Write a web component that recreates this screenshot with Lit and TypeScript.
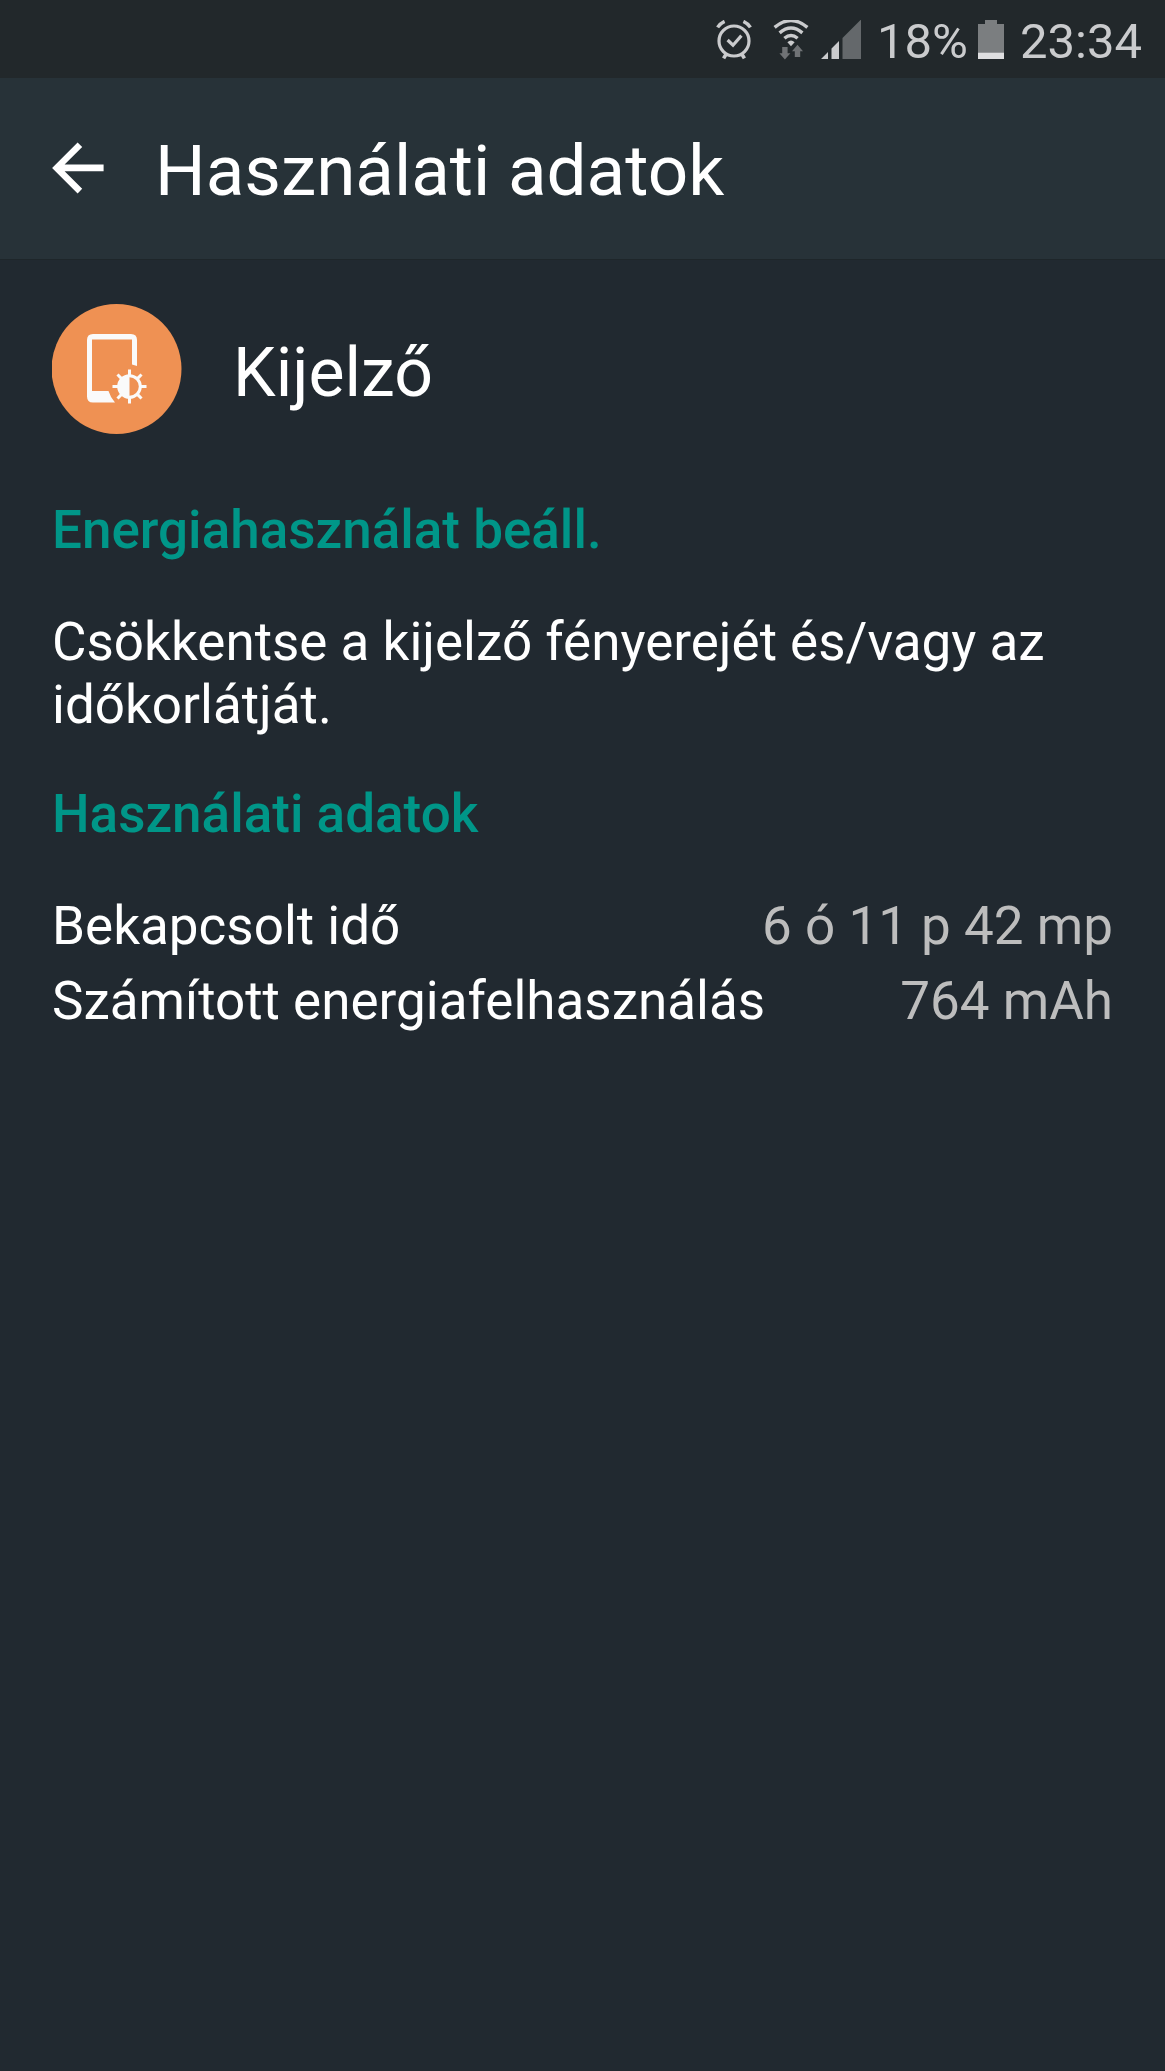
import { LitElement, html, css, svg } from "lit";
import { customElement } from "lit/decorators.js";

const usage = [
  { label: "Bekapcsolt idő", value: "6 ó 11 p 42 mp" },
  { label: "Számított energiafelhasználás", value: "764 mAh" },
];

const rays = [0, 45, 90, 135, 180, 225, 270, 315];

@customElement("status-bar")
class StatusBar extends LitElement {
  static styles = css`
    :host {
      display: flex;
      align-items: center;
      justify-content: flex-end;
      box-sizing: border-box;
      height: 78px;
      padding: 4px 23px 0 0;
      background: #22282b;
      color: #cacbcd;
      font-size: 49px;
      line-height: 58px;
    }
    svg {
      display: block;
      flex: none;
    }
    span,
    time {
      padding-top: 2px;
    }
    .alarm {
      margin-right: 21px;
    }
    .wifi {
      margin-right: 12px;
    }
    .signal {
      margin-right: 15px;
    }
    .battery {
      margin: 0 16px 0 10px;
    }
  `;

  render() {
    return html`
      <svg class="alarm" width="36" height="42" viewBox="0 0 36 42" fill="none" stroke="#cacbcd" aria-hidden="true">
        <circle cx="18" cy="21" r="15" stroke-width="3.2" />
        <path d="M11.6 20 L17 25.2 L25.4 15.6" stroke-width="3.2" />
        <path d="M1.6 7.4 Q4 3.4 8.6 1.4 M27.4 1.4 Q32 3.4 34.4 7.4" stroke-width="3.4" />
        <path d="M10.2 34 L7.6 38.4 M25.8 34 L28.4 38.4" stroke-width="3.6" />
      </svg>
      <svg class="wifi" width="36" height="42" viewBox="0 0 36 42" aria-hidden="true">
        <g fill="none" stroke="#cacbcd" stroke-width="3.4">
          <path d="M1.6 7.4 Q18 -6.4 34.4 7.4" />
          <path d="M6.6 12.9 Q18 3.3 29.4 12.9" />
          <path d="M11.4 18.2 Q18 12.6 24.6 18.2" />
        </g>
        <path d="M14.4 22.3 Q18 18.9 21.6 22.3 L18 26.2 Z" fill="#cacbcd" />
        <path d="M9.2 27 H14.6 V33.2 H17.4 L11.9 39.6 L6.4 33.2 H9.2 Z" fill="#707376" />
        <path d="M21.8 37 H27.2 V31.2 H30 L24.5 24.8 L19 31.2 H21.8 Z" fill="#707376" />
      </svg>
      <svg class="signal" width="41" height="42" viewBox="0 0 41 42" aria-hidden="true">
        <path d="M0 39 L7 32 V39 Z M10.5 39 V28.5 L18 21 V39 Z" fill="#cacbcd" />
        <path d="M21.5 39 V18 L40 -0.5 V39 Z" fill="#64686b" />
      </svg>
      <span>18%</span>
      <svg class="battery" width="26" height="42" viewBox="0 0 26 42" aria-hidden="true">
        <path d="M0 4 H7 V0 H19 V4 H26 V32.5 H0 Z" fill="#7b7e80" />
        <path d="M0 32.5 H26 V39 H0 Z" fill="#dedee0" />
      </svg>
      <time>23:34</time>
    `;
  }
}

@customElement("app-root")
class AppRoot extends LitElement {
  static styles = css`
    :host {
      display: block;
      min-height: 100vh;
      background: #212930;
      color: #fff;
      font-family: Roboto, "Open Sans", sans-serif;
      font-size: 53px;
      line-height: 63px;
    }
    h1,
    h2,
    h3,
    p,
    dl,
    dt,
    dd {
      margin: 0;
    }
    header {
      display: flex;
      align-items: center;
      gap: 51px;
      box-sizing: border-box;
      height: 182px;
      padding: 0 52px 2px;
      background: #273238;
      border-bottom: 1px solid #1e262a;
    }
    .back {
      display: block;
      flex: none;
      padding: 0;
      border: 0;
      background: none;
      color: inherit;
    }
    svg {
      display: block;
      flex: none;
    }
    h1 {
      padding-top: 6px;
      font-size: 71px;
      font-weight: 400;
      line-height: 84px;
    }
    main {
      padding: 44px 52px 48px;
    }
    .item {
      display: flex;
      align-items: center;
      gap: 51px;
      margin-bottom: 65px;
    }
    h2 {
      padding-top: 7px;
      font-size: 68px;
      font-weight: 400;
      line-height: 80px;
    }
    h3 {
      margin-bottom: 49px;
      color: #009688;
      font-size: 53px;
      font-weight: 500;
    }
    p {
      margin-bottom: 46px;
    }
    dl {
      display: flex;
      flex-direction: column;
      gap: 12px;
    }
    .row {
      display: flex;
      justify-content: space-between;
      gap: 24px;
    }
    dd {
      color: #bdbdbd;
      text-align: right;
    }
  `;

  render() {
    return html`
      <status-bar></status-bar>
      <header>
        <button class="back" aria-label="Vissza">
          <svg width="52" height="52" viewBox="0 0 52 52" aria-hidden="true">
            <path
              d="M25.6 0.4 L30.2 5 L12.6 22.6 H51.6 V29.2 H12.6 L30.2 46.8 L25.6 51.4 L0.1 25.9 Z"
              fill="#fff"
            />
          </svg>
        </button>
        <h1>Használati adatok</h1>
      </header>
      <main>
        <div class="item">
          <svg width="130" height="130" viewBox="0 0 130 130" aria-hidden="true">
            <circle cx="64.5" cy="65" r="65" fill="#ef9153" />
            <path
              d="M41 30 H79 Q85 30 85 36 V62 L80 60.6 V35.5 H40 V87 H56.5 Q58.5 93.5 63 98.5 H41 Q35 98.5 35 92.5 V36 Q35 30 41 30 Z"
              fill="#fafafa"
            />
            <circle cx="77.5" cy="82.5" r="10.8" fill="none" stroke="#fafafa" stroke-width="3" />
            <path d="M77.5 71 A11.5 11.5 0 0 0 77.5 94 Z" fill="#fafafa" />
            ${rays.map(
              (a) =>
                svg`<path d="M76 65.5 H79 V72 H76 Z" fill="#fafafa" transform="rotate(${a} 77.5 82.5)" />`
            )}
          </svg>
          <h2>Kijelző</h2>
        </div>
        <section>
          <h3>Energiahasználat beáll.</h3>
          <p>Csökkentse a kijelző fényerejét és/vagy az időkorlátját.</p>
        </section>
        <section>
          <h3>Használati adatok</h3>
          <dl>
            ${usage.map(
              (u) => html`<div class="row"><dt>${u.label}</dt><dd>${u.value}</dd></div>`
            )}
          </dl>
        </section>
      </main>
    `;
  }
}
